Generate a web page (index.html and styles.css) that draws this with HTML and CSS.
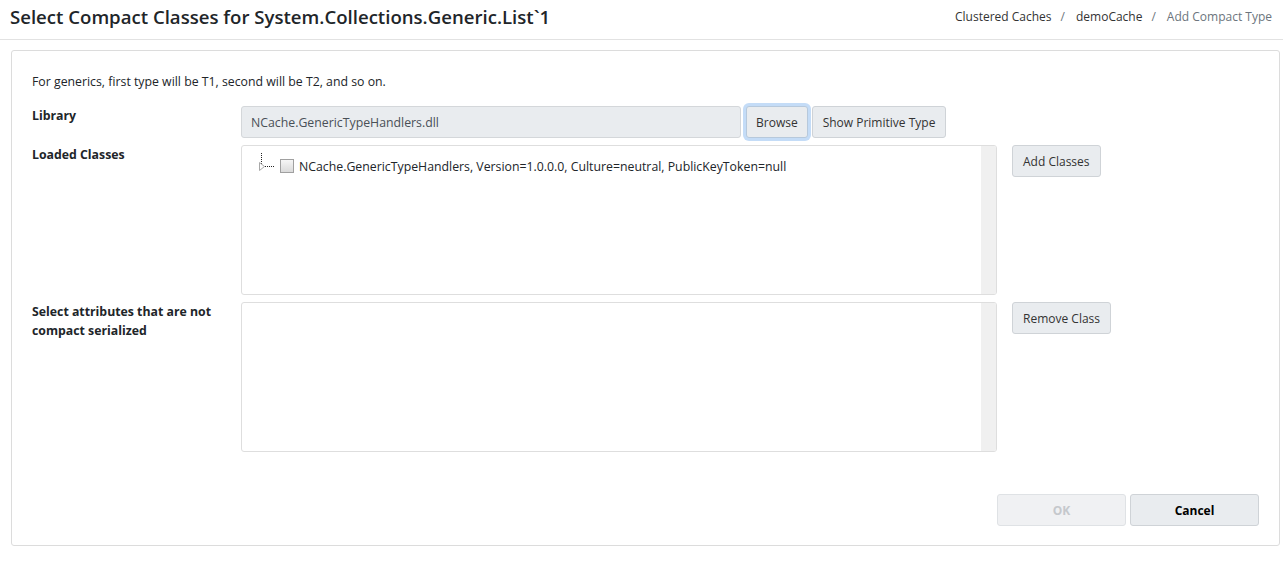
FILE: index.html
```html
<!DOCTYPE html>
<html lang="en">
<head>
    <meta charset="UTF-8">
    <meta name="viewport" content="width=device-width, initial-scale=1.0">
    <title>Add Compact Type</title>
    <link rel="stylesheet" href="styles.css">
</head>
<body>
    <header class="page-header">
        <h1 class="page-title">Select Compact Classes for System.Collections.Generic.List`1</h1>
        <nav class="breadcrumb">
            <a href="#" class="crumb">Clustered Caches</a>
            <span class="crumb-sep">/</span>
            <a href="#" class="crumb">demoCache</a>
            <span class="crumb-sep">/</span>
            <span class="crumb crumb-active">Add Compact Type</span>
        </nav>
    </header>

    <main class="panel">
        <p class="hint">For generics, first type will be T1, second will be T2, and so on.</p>

        <div class="form-row">
            <label class="field-label">Library</label>
            <div class="library-field">
                <input type="text" class="library-input" value="NCache.GenericTypeHandlers.dll" readonly>
                <button class="btn btn-focus">Browse</button>
                <button class="btn">Show Primitive Type</button>
            </div>
        </div>

        <div class="form-row">
            <label class="field-label">Loaded Classes</label>
            <div class="list-box">
                <div class="list-body">
                    <div class="tree-node">
                        <svg class="tree-lines" width="18" height="20" viewBox="0 0 18 20">
                            <path d="M5.5 0 V14" stroke="#222" stroke-width="1" stroke-dasharray="1 1"/>
                            <path d="M9 13.5 H18" stroke="#222" stroke-width="1" stroke-dasharray="1 1"/>
                            <path d="M3.5 9.5 L8.5 13.5 L3.5 17.5 Z" fill="#fff" stroke="#a8a8a8" stroke-width="1"/>
                        </svg>
                        <span class="tree-check"></span>
                        <span class="tree-text">NCache.GenericTypeHandlers, Version=1.0.0.0, Culture=neutral, PublicKeyToken=null</span>
                    </div>
                </div>
                <div class="list-track"></div>
            </div>
            <div class="side-actions">
                <button class="btn">Add Classes</button>
            </div>
        </div>

        <div class="form-row">
            <label class="field-label">Select attributes that are not compact serialized</label>
            <div class="list-box">
                <div class="list-body"></div>
                <div class="list-track"></div>
            </div>
            <div class="side-actions">
                <button class="btn">Remove Class</button>
            </div>
        </div>

        <div class="panel-footer">
            <button class="btn btn-wide btn-strong" disabled>OK</button>
            <button class="btn btn-wide btn-strong">Cancel</button>
        </div>
    </main>
</body>
</html>
```

FILE: styles.css
```css
* {
    margin: 0;
    padding: 0;
    box-sizing: border-box;
}

body {
    font-family: "Open Sans", "Noto Sans", sans-serif;
    font-size: 12.3px;
    color: #212529;
    background: #fff;
}

.page-header {
    display: flex;
    justify-content: space-between;
    align-items: center;
    height: 40px;
    padding: 0 11px 0 10px;
    border-bottom: 1px solid #e2e2e2;
}

.page-title {
    font-size: 18.6px;
    font-weight: 600;
    color: #212529;
    margin-top: -7px;
}

.breadcrumb {
    display: flex;
    align-items: center;
    font-size: 12px;
    margin-top: -7px;
}

.crumb {
    color: #333;
    text-decoration: none;
}

.crumb-sep {
    color: #6c757d;
    padding: 0 11px 0 9px;
}

.crumb-active {
    color: #6c757d;
}

.panel {
    margin: 10px 3px 0 11px;
    border: 1px solid #dcdcdc;
    border-radius: 3px;
    padding: 21px 20px 19px 20px;
}

.hint {
    line-height: 18px;
    margin-top: 1px;
    margin-bottom: 15px;
}

.form-row {
    display: flex;
    align-items: flex-start;
    margin-bottom: 7px;
}

.field-label {
    width: 190px;
    margin-right: 19px;
    font-weight: 700;
    line-height: 19px;
}

.library-field {
    display: flex;
    align-items: center;
}

.library-input {
    width: 500px;
    height: 32px;
    padding: 0 9px;
    background: #e9ecef;
    border: 1px solid #d4d7da;
    border-radius: 3px;
    font-family: inherit;
    font-size: 12.3px;
    color: #495057;
}

.btn {
    height: 32px;
    padding: 0 10px;
    background: #e9ecef;
    border: 1px solid #cfd3d7;
    border-radius: 3px;
    font-family: inherit;
    font-size: 12px;
    color: #333;
    cursor: pointer;
}

.btn-focus {
    padding: 0 9px;
    box-shadow: 0 0 0 3px #c4dcf7;
    border-color: #b7c9dc;
    margin: 0 4px 0 5px;
}

.list-box {
    display: flex;
    width: 756px;
    height: 150px;
    border: 1px solid #dedede;
    border-radius: 3px;
    overflow: hidden;
}

.list-body {
    flex: 1;
    padding: 7px 0 0 14px;
}

.list-track {
    width: 15px;
    background: #f0f0f0;
}

.tree-node {
    display: flex;
    align-items: flex-start;
}

.tree-lines {
    display: block;
}

.tree-check {
    width: 14px;
    height: 14px;
    margin: 6px 5px 0 6px;
    border: 1px solid #a0a0a0;
    background: linear-gradient(#f6f6f6, #dadada);
}

.tree-text {
    line-height: 18px;
    margin-top: 5px;
    color: #212529;
}

.side-actions {
    margin-left: 15px;
}

.panel-footer {
    display: flex;
    justify-content: flex-end;
    gap: 4px;
    margin-top: 42px;
}

.btn-wide {
    width: 129px;
}

.btn-strong {
    font-weight: 700;
    color: #000;
}

.btn-strong:disabled {
    background: #f0f1f3;
    border-color: #dfe2e5;
    color: #c5c8cc;
    cursor: default;
}
```
